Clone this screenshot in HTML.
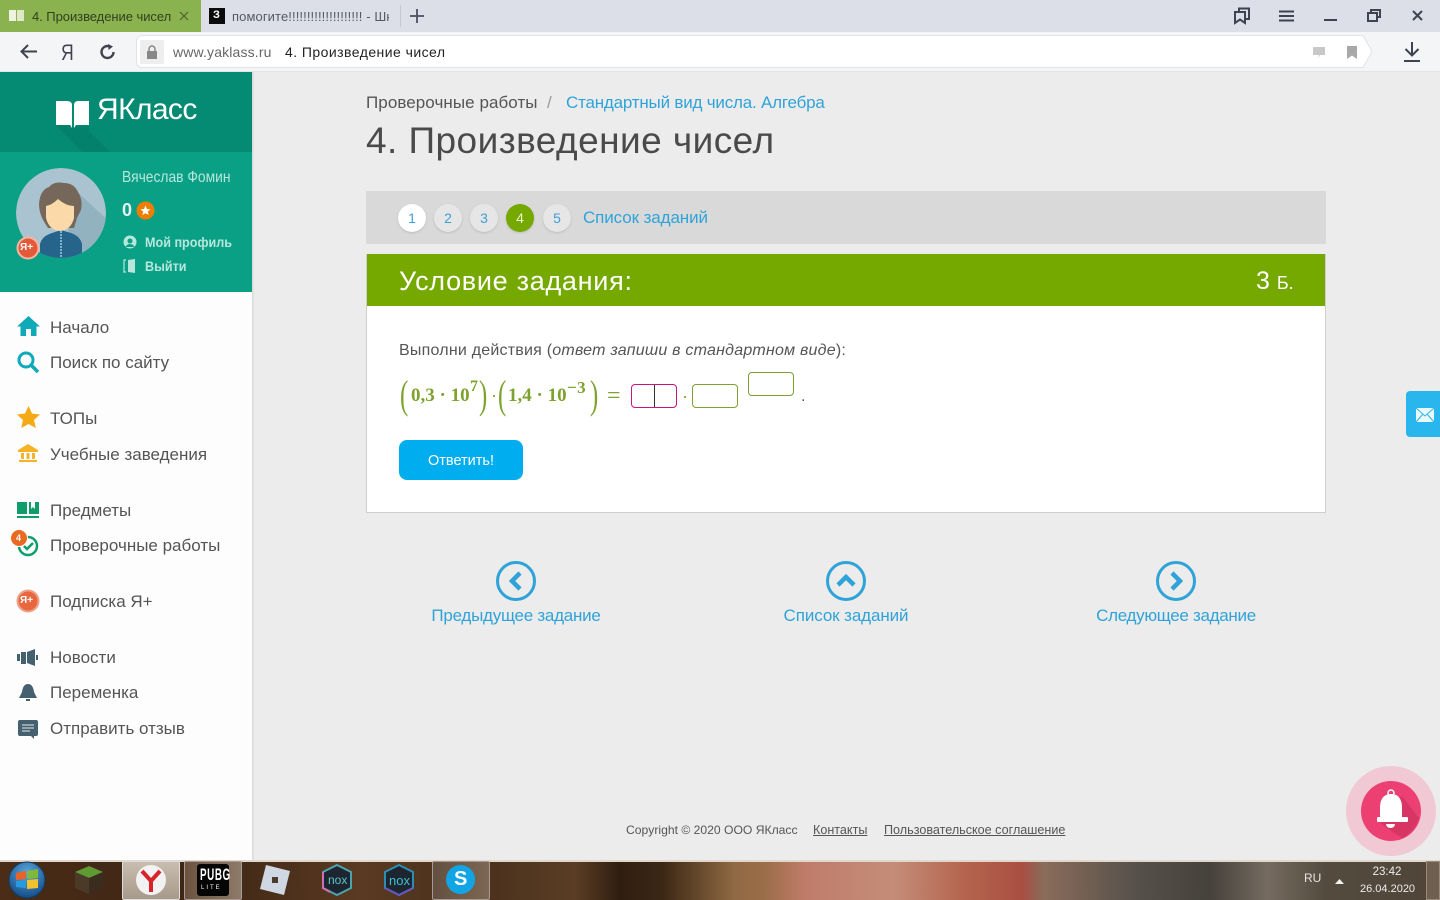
<!DOCTYPE html>
<html lang="ru"><head><meta charset="utf-8"><title>4. Произведение чисел</title>
<style>
html,body{margin:0;padding:0;width:1440px;height:900px;overflow:hidden;background:#ececec;font-family:"Liberation Sans","DejaVu Sans",sans-serif;color:#555}
.a{position:absolute;white-space:nowrap;line-height:1}
.box{position:absolute}
svg{position:absolute;overflow:visible}
.nav{font-size:17px;color:#555;letter-spacing:0}
.link{color:#2fa3d8}
.st{position:absolute;top:204px;width:28px;height:28px;border-radius:50%;background:#e6e6e6;box-shadow:0 1px 2px #bbb;color:#3e9fd5;font-size:14px;line-height:28px;text-align:center}
.m{font-family:'Liberation Serif',serif;color:#7da22d}
</style></head><body>

<!-- browser chrome -->
<div class="box" style="left:0;top:0;width:1440px;height:32px;background:#dcdfe8"></div>
<div class="box" style="left:0;top:0;width:201px;height:32px;background:#8ab24f"></div>
<svg style="left:9px;top:10px" width="16" height="12"><rect width="7" height="11" fill="#eef3e0"/><rect x="8" width="7" height="11" fill="#dfe8c8"/></svg>
<div class="a" style="left:32px;top:10px;font-size:13px;color:#33401f;letter-spacing:-.05px">4. Произведение чисел</div>
<svg style="left:179px;top:11px" width="10" height="10"><path d="M1 1L9 9M9 1L1 9" stroke="#4d6329" stroke-width="1.2"/></svg>
<div class="box" style="left:209px;top:8px;width:16px;height:16px;background:#0b0b0b"></div>
<div class="a" style="left:213px;top:10px;font-size:11px;font-weight:bold;color:#fff">З</div>
<div class="a" style="left:232px;top:10px;width:157px;overflow:hidden;font-size:13px;color:#555a66;letter-spacing:.1px">помогите!!!!!!!!!!!!!!!!!!!! - Шк</div>
<div class="box" style="left:400px;top:5px;width:1px;height:22px;background:#c4c7d0"></div>
<svg style="left:410px;top:9px" width="14" height="14"><path d="M7 0V14M0 7H14" stroke="#4a4f5c" stroke-width="1.8"/></svg>
<svg style="left:1233px;top:7px" width="18" height="18" fill="none" stroke="#3d4350" stroke-width="2"><path d="M6 4V1.500H16V12H13"/><path d="M2 5H12V16L7 12.500L2 16Z"/></svg>
<svg style="left:1279px;top:10px" width="15" height="12"><path d="M0 1.500H15M0 6H15M0 10.500H15" stroke="#3d4350" stroke-width="2"/></svg>
<div class="box" style="left:1324px;top:19px;width:13px;height:2px;background:#3d4350"></div>
<svg style="left:1367px;top:9px" width="14" height="13" fill="none" stroke="#3d4350" stroke-width="2"><rect x="1" y="4" width="9" height="8"/><path d="M4 4V1H13V8H10"/></svg>
<svg style="left:1412px;top:10px" width="11" height="11"><path d="M1 1L10 10M10 1L1 10" stroke="#3d4350" stroke-width="2"/></svg>

<div class="box" style="left:0;top:32px;width:1440px;height:40px;background:#f4f5f7;border-bottom:1px solid #e4e4e4;box-sizing:border-box"></div>
<svg style="left:136px;top:35px" width="1240" height="33"><path d="M7 .5H1227L1236 16.500L1227 32.500H7Q.5 32.500 .5 26V7Q.5 .5 7 .5Z" fill="#fff" stroke="#e2e3e6"/></svg>
<svg style="left:20px;top:44px" width="17" height="15" fill="none" stroke="#40444f" stroke-width="2"><path d="M1 7.500H17M8 1L1.500 7.500L8 14"/></svg>
<div class="a" style="left:61px;top:42px;font-size:22px;color:#40444f;transform-origin:0 0;transform:scaleX(.8)">Я</div>
<svg style="left:100px;top:44px" width="16" height="16" fill="none" stroke="#40444f" stroke-width="2.4"><path d="M13.500 8A6 6 0 1 1 9 2.200"/><path d="M8 0L13 2.500L8.500 6Z" fill="#40444f" stroke="none"/></svg>
<div class="box" style="left:140px;top:40px;width:24px;height:24px;background:#eeeeee;border-radius:2px"></div>
<svg style="left:146px;top:45px" width="12" height="14" fill="none"><path d="M3 6V4A3 3 0 0 1 9 4V6" stroke="#888" stroke-width="1.500"/><rect x="1" y="6" width="10" height="8" fill="#888"/></svg>
<div class="a" style="left:173px;top:45px;font-size:14px;color:#666;letter-spacing:.15px">www.yaklass.ru</div>
<div class="a" style="left:285px;top:45px;font-size:14px;color:#222;letter-spacing:.45px">4. Произведение чисел</div>
<svg style="left:1313px;top:47px" width="12" height="11"><path d="M0 0H12V8H7L5.500 11V8H0Z" fill="#c8c8c8"/></svg>
<svg style="left:1347px;top:46px" width="10" height="13"><path d="M0 0H10V13L5 9.500L0 13Z" fill="#a8a8a8"/></svg>
<svg style="left:1404px;top:42px" width="16" height="20" fill="none" stroke="#3d4350" stroke-width="2"><path d="M8 0V13M1.500 7L8 13.500L14.500 7M0 19H16"/></svg>

<!-- sidebar -->
<div class="box" style="left:0;top:72px;width:252px;height:788px;background:#fdfdfd;box-shadow:1px 0 0 #dcdcdc,2px 0 0 #e2e2e2"></div>
<div class="box" style="left:0;top:72px;width:252px;height:80px;background:#058a73;overflow:hidden"></div>
<svg style="left:56px;top:101px" width="36" height="51" viewBox="0 0 36 51"><path d="M0 24H15L17 27L19 25H33L33 30L54 51H26Z" fill="#047e69" opacity=".75"/><path d="M0 0H11Q15 0 16 3V27L14 24H0Z" fill="#fff"/><path d="M33 0H22Q19 0 18 3V27L20 24H33Z" fill="#fff"/></svg>
<div class="a" style="left:97px;top:95px;font-size:30px;color:#fff;letter-spacing:-.6px">ЯКласс</div>
<div class="box" style="left:0;top:152px;width:252px;height:140px;background:#0aa086"></div>
<svg style="left:16px;top:168px" width="90" height="90">
<defs><clipPath id="c"><circle cx="45" cy="45" r="45"/></clipPath></defs>
<g clip-path="url(#c)"><circle cx="45" cy="45" r="45" fill="#a9c4d0"/>
<path d="M55 18L100 60V100H50Z" fill="#93b2c0"/>
<path d="M24 90V76Q26 68 36 65L45 62L55 65Q64 68 66 76V90Z" fill="#27648c"/>
<path d="M45 63V90" stroke="#7fb2cc" stroke-width="2" stroke-dasharray="2 1"/>
<path d="M23 36Q24 22 33 19Q38 13 48 15Q58 15 62 24Q67 32 65 42L61 50L58 60H32L27 52Q23 44 23 36Z" fill="#75675a"/>
<path d="M30 38Q36 37 42 31Q50 38 58 38L58 50Q55 62 44 63Q33 62 30 50Z" fill="#fbd9a8"/></g></svg>
<svg style="left:16px;top:236px" width="24" height="24"><circle cx="12" cy="12" r="10.500" fill="#e5593b" stroke="#f5b5a0" stroke-width="2"/></svg>
<div class="a" style="left:20px;top:243px;font-size:10px;font-weight:bold;color:#fff">Я+</div>
<div class="a" style="left:122px;top:170px;font-size:16px;color:#b6e6dc;transform-origin:0 0;transform:scaleX(.865)">Вячеслав Фомин</div>
<div class="a" style="left:122px;top:201px;font-size:18px;font-weight:bold;color:#e4f5f1">0</div>
<svg style="left:136px;top:201px" width="19" height="19"><circle cx="9.500" cy="9.500" r="9" fill="#ef7d00"/><path d="M9.500 4.500L11 8L14.500 8.300L11.800 10.600L12.700 14L9.500 12.200L6.300 14L7.200 10.600L4.500 8.300L8 8Z" fill="#fff"/></svg>
<svg style="left:123px;top:235px" width="14" height="14"><circle cx="7" cy="7" r="6.500" fill="#b6e6dc"/><circle cx="7" cy="6" r="2.500" fill="#0aa086"/><path d="M2.500 12Q4 9 7 9Q10 9 11.500 12Z" fill="#0aa086"/></svg>
<div class="a" style="left:145px;top:235px;font-size:14px;font-weight:bold;color:#b6e6dc;transform-origin:0 0;transform:scaleX(.9)">Мой профиль</div>
<svg style="left:123px;top:259px" width="14" height="14"><path d="M3 1H1V13H3" fill="none" stroke="#b6e6dc" stroke-width="1.200"/><path d="M5 1L12 0V14L5 13Z" fill="#b6e6dc"/></svg>
<div class="a" style="left:145px;top:259px;font-size:14px;font-weight:bold;color:#b6e6dc;transform-origin:0 0;transform:scaleX(.9)">Выйти</div>

<!-- nav -->
<svg style="left:17px;top:316px" width="23" height="21"><path d="M11.500 0L23 10.500H19.500V20H14V13H9V20H3.500V10.500H0Z" fill="#0fa9b8"/></svg>
<div class="a nav" style="left:50px;top:319px">Начало</div>
<svg style="left:17px;top:351px" width="22" height="22" fill="none" stroke="#0fa9b8"><circle cx="9" cy="9" r="7" stroke-width="3"/><path d="M14 14L21 21" stroke-width="3.500"/></svg>
<div class="a nav" style="left:50px;top:354px">Поиск по сайту</div>
<svg style="left:17px;top:406px" width="23" height="22"><path d="M11.500 0L15 7.500L23 8.500L17 14L18.800 22L11.500 18L4.200 22L6 14L0 8.500L8 7.500Z" fill="#f5a914"/></svg>
<div class="a nav" style="left:50px;top:410px">ТОПы</div>
<svg style="left:18px;top:444px" width="20" height="20" fill="#f5b32a"><path d="M10 0L20 6V8H0V6Z"/><rect x="3" y="9" width="3" height="6"/><rect x="8.500" y="9" width="3" height="6"/><rect x="14" y="9" width="3" height="6"/><rect x="1" y="16" width="18" height="2"/></svg>
<div class="a nav" style="left:50px;top:446px">Учебные заведения</div>
<svg style="left:17px;top:501px" width="22" height="18" fill="#0f9d6b"><path d="M0 1H10V13H0Z"/><path d="M12 1H14V8L16 6L18 8V1H22V13H12Z"/><rect y="15" width="22" height="2"/></svg>
<div class="a nav" style="left:50px;top:502px">Предметы</div>
<svg style="left:18px;top:535px" width="22" height="22" fill="none" stroke="#0f9d6b" stroke-width="2.500"><circle cx="10" cy="11" r="9"/><path d="M6 11L9 14L15 8"/></svg>
<div class="box" style="left:11px;top:530px;width:16px;height:16px;border-radius:50%;background:#ea6a22;box-shadow:0 0 0 1px #fff"></div>
<div class="a" style="left:16px;top:534px;font-size:9px;font-weight:bold;color:#fff">4</div>
<div class="a nav" style="left:50px;top:537px">Проверочные работы</div>
<svg style="left:16px;top:589px" width="24" height="24"><circle cx="12" cy="12" r="10.500" fill="#e8673f" stroke="#efa287" stroke-width="2"/></svg>
<div class="a" style="left:20px;top:596px;font-size:10px;font-weight:bold;color:#fff">Я+</div>
<div class="a nav" style="left:50px;top:593px">Подписка Я+</div>
<svg style="left:17px;top:649px" width="22" height="18" fill="#456170"><rect y="5" width="3" height="7"/><path d="M4 3H9V15H4Z"/><path d="M10 3L18 0V17L10 14Z"/><rect x="19" y="6" width="2" height="5"/></svg>
<div class="a nav" style="left:50px;top:649px">Новости</div>
<svg style="left:19px;top:684px" width="18" height="18" fill="#456170"><path d="M9 0Q14 0 15 8L18 14H0L3 8Q4 0 9 0Z"/><rect x="7" y="15" width="4" height="2"/></svg>
<div class="a nav" style="left:50px;top:684px">Переменка</div>
<svg style="left:18px;top:720px" width="20" height="20"><path d="M2 0H18Q20 0 20 2V14Q20 16 18 16H16V19L13 16H2Q0 16 0 14V2Q0 0 2 0Z" fill="#456170"/><path d="M4 5H16M4 8H16M4 11H12" stroke="#c5d0d6" stroke-width="1.200"/></svg>
<div class="a nav" style="left:50px;top:720px">Отправить отзыв</div>

<!-- main -->
<div class="a" style="left:366px;top:94px;font-size:17px;letter-spacing:.07px;color:#555">Проверочные работы</div>
<div class="a" style="left:547px;top:94px;font-size:17px;color:#999">/</div>
<div class="a link" style="left:566px;top:94px;font-size:17px;letter-spacing:-.2px">Стандартный вид числа. Алгебра</div>
<div class="a" style="left:366px;top:122px;font-size:37px;letter-spacing:.45px;color:#4a4a4a">4. Произведение чисел</div>

<div class="box" style="left:366px;top:191px;width:960px;height:53px;background:#d9d9d9"></div>
<div class="st" style="left:398px;background:#fff">1</div>
<div class="st" style="left:434px">2</div>
<div class="st" style="left:470px">3</div>
<div class="st" style="left:506px;background:#76a900;color:#eaf5c8">4</div>
<div class="st" style="left:543px">5</div>
<div class="a link" style="left:583px;top:209px;font-size:17px;letter-spacing:-.1px">Список заданий</div>

<div class="box" style="left:366px;top:254px;width:960px;height:259px;background:#fff;border:1px solid #cfcfcf;box-sizing:border-box"></div>
<div class="box" style="left:367px;top:254px;width:958px;height:52px;background:#76a900"></div>
<div class="a" style="left:399px;top:268px;font-size:27px;letter-spacing:.72px;color:#fff">Условие задания:</div>
<div class="a" style="left:1256px;top:269px;font-size:25px;color:#fff">3 <span style="font-size:18px">Б.</span></div>
<div class="a" style="left:399px;top:343px;font-size:16px;color:#555;letter-spacing:.22px">Выполни действия (<i>ответ запиши в стандартном виде</i>):</div>

<!-- math -->
<div class="a m" style="left:400px;top:375px;font-size:40px;transform-origin:0 0;transform:scaleX(.62)">(</div>
<div class="a m" style="left:411px;top:386px;font-size:19px;font-weight:bold">0,3 · 10</div>
<div class="a m" style="left:470px;top:379px;font-size:16px;font-weight:bold">7</div>
<div class="a m" style="left:479px;top:375px;font-size:40px;transform-origin:0 0;transform:scaleX(.62)">)</div>
<div class="a m" style="left:491px;top:387px;font-size:18px">·</div>
<div class="a m" style="left:498px;top:375px;font-size:40px;transform-origin:0 0;transform:scaleX(.62)">(</div>
<div class="a m" style="left:508px;top:386px;font-size:19px;font-weight:bold">1,4 · 10</div>
<div class="a m" style="left:567px;top:379px;font-size:17px;font-weight:bold;letter-spacing:.5px">−3</div>
<div class="a m" style="left:590px;top:375px;font-size:40px;transform-origin:0 0;transform:scaleX(.62)">)</div>
<div class="a m" style="left:607px;top:384px;font-size:24px">=</div>
<div class="box" style="left:631px;top:384px;width:46px;height:24px;border:1.500px solid #c8157f;border-radius:4px;box-sizing:border-box;background:#fff"></div>
<div class="box" style="left:654px;top:385px;width:1px;height:22px;background:#333"></div>
<div class="a m" style="left:682px;top:388px;font-size:18px">·</div>
<div class="box" style="left:692px;top:384px;width:46px;height:24px;border:1.500px solid #7da22d;border-radius:4px;box-sizing:border-box;background:#fff"></div>
<div class="box" style="left:748px;top:372px;width:46px;height:24px;border:1.500px solid #7da22d;border-radius:4px;box-sizing:border-box;background:#fff"></div>
<div class="a" style="left:801px;top:389px;font-size:16px;color:#555">.</div>

<div class="box" style="left:399px;top:440px;width:124px;height:40px;background:#00aeef;border-radius:8px"></div>
<div class="a" style="left:399px;top:454px;width:124px;text-align:center;font-size:14.500px;color:#fff">Ответить!</div>

<!-- prev/list/next -->
<svg style="left:496px;top:561px" width="40" height="40" fill="none" stroke="#2fa3d8"><circle cx="20" cy="20" r="18.500" stroke-width="3"/><path d="M24 12L16 20L24 28" stroke-width="4.500"/></svg>
<svg style="left:826px;top:561px" width="40" height="40" fill="none" stroke="#2fa3d8"><circle cx="20" cy="20" r="18.500" stroke-width="3"/><path d="M12 24L20 16L28 24" stroke-width="4.500"/></svg>
<svg style="left:1156px;top:561px" width="40" height="40" fill="none" stroke="#2fa3d8"><circle cx="20" cy="20" r="18.500" stroke-width="3"/><path d="M16 12L24 20L16 28" stroke-width="4.500"/></svg>
<div class="a link" style="left:366px;top:607px;width:300px;text-align:center;font-size:17px;letter-spacing:-.25px">Предыдущее задание</div>
<div class="a link" style="left:696px;top:607px;width:300px;text-align:center;font-size:17px;letter-spacing:-.1px">Список заданий</div>
<div class="a link" style="left:1026px;top:607px;width:300px;text-align:center;font-size:17px;letter-spacing:-.3px">Следующее задание</div>

<!-- footer -->
<div class="a" style="left:626px;top:824px;font-size:12.150px;color:#555">Copyright © 2020 ООО ЯКласс</div>
<div class="a" style="left:813px;top:824px;font-size:12.600px;color:#555;text-decoration:underline">Контакты</div>
<div class="a" style="left:884px;top:824px;font-size:12.600px;color:#555;text-decoration:underline">Пользовательское соглашение</div>

<!-- feedback -->
<div class="box" style="left:1406px;top:391px;width:34px;height:46px;background:#29b6ec;border-radius:4px 0 0 4px"></div>
<svg style="left:1416px;top:408px" width="18" height="14"><rect width="18" height="14" fill="#eafaff"/><path d="M0 0L9 8L18 0M0 14L7 6M18 14L11 6" fill="none" stroke="#29b6ec" stroke-width="1"/></svg>

<!-- bell -->
<svg style="left:1346px;top:766px" width="90" height="90">
<circle cx="45" cy="45" r="45" fill="#f0c9d4"/><circle cx="45" cy="45" r="30" fill="#ec3f72"/>
<path d="M56 30L73 52Q68 66 56 72L38 60L31 54Z" fill="#c9305e" opacity=".6"/>
<circle cx="45" cy="27" r="3" fill="none" stroke="#fff" stroke-width="1.500"/>
<path d="M45 28Q55 28 56 40V51H34V40Q35 28 45 28Z" fill="#fff"/>
<rect x="31" y="51" width="31" height="5" rx="1" fill="#fff"/><path d="M40 58H49Q48.500 62 44.500 62Q40.500 62 40 58Z" fill="#fff"/></svg>

<!-- taskbar -->
<div class="box" style="left:0;top:860px;width:1440px;height:40px;background:linear-gradient(90deg,#4a2c17 0,#3d2514 14%,#5a3a22 25%,#49301c 33%,#5a3d24 40%,#2f1e10 43%,#3c2715 46%,#8f6a43 51%,#9a6d48 53%,#c07c6a 56%,#c48d78 62%,#b4644f 67%,#a94f42 71%,#8a6c5a 72.500%,#55504a 79%,#45413b 84%,#756b60 88%,#544b3f 92%,#4f4437 100%);border-top:2px solid #e0d8cc;box-sizing:border-box"></div>
<svg style="left:8px;top:861px" width="38" height="38"><defs><radialGradient id="o" cx="50%" cy="30%" r="70%"><stop offset="0" stop-color="#5aa8dc"/><stop offset="1" stop-color="#144c86"/></radialGradient></defs><circle cx="19" cy="19" r="18" fill="url(#o)" stroke="#123a60" stroke-width="1"/><path d="M8 12L18 10V18L8 19Z" fill="#e8622a"/><path d="M19 10L30 8V17L19 18Z" fill="#7fb83a"/><path d="M8 20L18 19V27L8 26Z" fill="#2a9ae0"/><path d="M19 19L30 18V27L19 28Z" fill="#f2c22e"/></svg>
<svg style="left:75px;top:866px" width="28" height="28"><path d="M14 0L28 6L14 12L0 6Z" fill="#5f9a35"/><path d="M0 6L14 12V28L0 22Z" fill="#4c3a28"/><path d="M28 6L14 12V28L28 22Z" fill="#3a2c1e"/></svg>
<div class="box" style="left:122px;top:861px;width:58px;height:39px;background:linear-gradient(#c8bdb0,#a89a8a);border:1px solid #ddd;box-sizing:border-box;border-radius:2px"></div>
<svg style="left:136px;top:865px" width="30" height="30"><circle cx="15" cy="15" r="15" fill="#f2f2f2"/><path d="M6 6L15 16L24 6M15 16V27" fill="none" stroke="#d8232a" stroke-width="4"/></svg>
<div class="box" style="left:184px;top:861px;width:58px;height:39px;background:linear-gradient(90deg,#6b5340,#8e7a68);border:1px solid #a99;box-sizing:border-box;border-radius:2px"></div>
<div class="box" style="left:197px;top:864px;width:32px;height:32px;background:#050505;border-radius:3px"></div>
<div class="a" style="left:200px;top:866px;font-size:17px;font-weight:bold;color:#fff;transform-origin:0 0;transform:scaleX(.58);letter-spacing:1px">PUBG</div>
<div class="a" style="left:201px;top:885px;font-size:6px;color:#fff;letter-spacing:2px">LITE</div>
<svg style="left:260px;top:865px" width="30" height="30"><path d="M6 0L30 6L24 30L0 24Z" fill="#cfd7e2"/><rect x="12" y="12" width="6" height="6" fill="#4b3a2e"/></svg>
<svg style="left:322px;top:864px" width="30" height="32"><path d="M15 1L29 8V24L15 31L1 24V8Z" fill="#1c2530" stroke="#4aa4b0" stroke-width="2"/><path d="M1 8V24L8 28" fill="none" stroke="#d070b0" stroke-width="2"/></svg>
<div class="a" style="left:328px;top:874px;font-size:12px;color:#5cc5c8">nox</div>
<svg style="left:384px;top:864px" width="30" height="32"><path d="M15 1L29 8V24L15 31L1 24V8Z" fill="#1c2530" stroke="#2a8fb0" stroke-width="2"/><path d="M1 24L15 31L29 24" fill="none" stroke="#6a55c0" stroke-width="2"/></svg>
<div class="a" style="left:389px;top:874px;font-size:13px;color:#3fc0d0">nox</div>
<div class="box" style="left:432px;top:861px;width:58px;height:39px;background:linear-gradient(90deg,#64503f,#7c6754);border:1px solid #a99;box-sizing:border-box;border-radius:2px"></div>
<div class="box" style="left:446px;top:865px;width:29px;height:29px;border-radius:50%;background:#12a5e6"></div>
<div class="a" style="left:454px;top:869px;font-size:20px;font-weight:bold;color:#fff">S</div>
<div class="a" style="left:1304px;top:872px;font-size:12px;color:#e8e4de">RU</div>
<svg style="left:1335px;top:879px" width="9" height="5"><path d="M0 5L4.500 0L9 5Z" fill="#f2f2f2"/></svg>
<div class="a" style="left:1360px;top:867px;width:54px;text-align:center;font-size:11.500px;color:#eee">23:42</div>
<div class="a" style="left:1360px;top:884px;width:54px;text-align:center;font-size:11px;color:#eee">26.04.2020</div>
<div class="box" style="left:1426px;top:861px;width:14px;height:39px;background:#6e5f4e;border:1px solid #9a8c7c;box-sizing:border-box"></div>
</body></html>
